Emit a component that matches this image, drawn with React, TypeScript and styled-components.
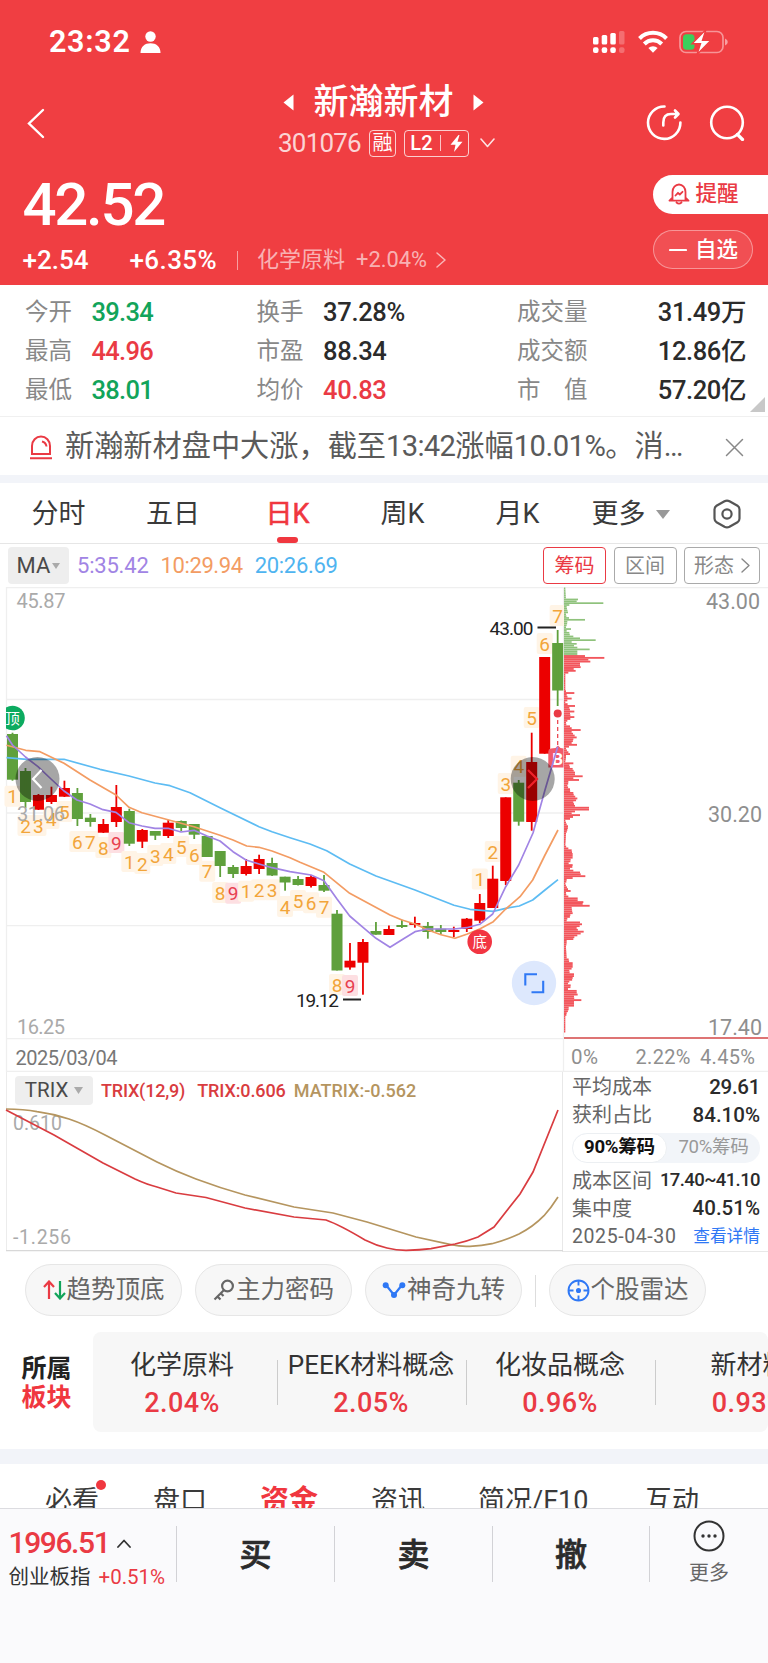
import React from "react";
import styled, { createGlobalStyle } from "styled-components";

const RED = "#f0373f";
const UP = "#ea3a44";
const DOWN = "#12a45a";
const FONT = `Roboto, "Noto Sans CJK SC", sans-serif`;

const Global = createGlobalStyle`
  *{box-sizing:border-box}
  body{margin:0;background:#fff;font-family:${FONT};line-height:1;color:#333}
`;

const Page = styled.div`
  width: 768px;
  height: 1663px;
  overflow: hidden;
  display: flex;
  flex-direction: column;
`;

type TxtProps = { $s: number; $c?: string; $w?: number; $ls?: number; $ml?: number; $y?: number };
const Txt = styled.span<TxtProps>`
  font-size: ${(p) => p.$s}px;
  color: ${(p) => p.$c ?? "inherit"};
  font-weight: ${(p) => p.$w ?? 400};
  letter-spacing: ${(p) => p.$ls ?? 0}px;
  margin-left: ${(p) => p.$ml ?? 0}px;
  padding-top: ${(p) => p.$y ?? 0}px;
  white-space: nowrap;
`;

/* ---------- header ---------- */
const Header = styled.header`
  height: 285px;
  background: #f03e42;
  color: #fff;
  flex: none;
`;
const StatusBar = styled.div`
  height: 78px;
  padding: 6px 40px 0 49px;
  display: flex;
  align-items: center;
`;
const StatusIcons = styled.div`
  margin-left: auto;
  display: flex;
  align-items: center;
`;
const NavRow = styled.div`
  height: 86px;
  padding: 0 23px 0 26px;
  display: grid;
  grid-template-columns: 95px 1fr 99px;
  align-items: center;
`;
const TitleBlock = styled.div`
  display: flex;
  flex-direction: column;
  align-items: center;
  padding-bottom: 3px;
`;
const TitleLine = styled.div`
  display: flex;
  align-items: center;
  gap: 19px;
  height: 40px;
`;
const CodeLine = styled.div`
  display: flex;
  align-items: center;
  height: 28px;
  margin-top: 7px;
  padding-left: 6px;
`;
const Badge = styled.span<{ $w: number; $ml: number }>`
  width: ${(p) => p.$w}px;
  height: 27px;
  margin-left: ${(p) => p.$ml}px;
  border: 1.5px solid rgba(255, 255, 255, 0.75);
  border-radius: 4px;
  display: flex;
  align-items: center;
  justify-content: center;
  font-size: 20px;
`;
const NavActions = styled.div`
  display: flex;
  justify-content: space-between;
  padding-top: 3px;
`;
const PriceRow = styled.div`
  display: flex;
  justify-content: space-between;
  height: 121px;
`;
const PriceCol = styled.div`
  padding: 11px 0 0 22.5px;
`;
const ChangeLine = styled.div`
  display: flex;
  align-items: center;
  height: 26px;
  margin-top: 12px;
`;
const VLine = styled.i<{ $h: number; $c: string; $ml?: number }>`
  width: 1px;
  flex: none;
  height: ${(p) => p.$h}px;
  background: ${(p) => p.$c};
  margin-left: ${(p) => p.$ml ?? 0}px;
`;
const PillCol = styled.div`
  width: 115px;
  padding-top: 10.5px;
`;
const AlertPill = styled.div`
  height: 39px;
  border-radius: 20px 0 0 20px;
  background: #fff;
  color: ${UP};
  display: flex;
  align-items: center;
  padding-left: 15px;
`;
const WatchPill = styled.div`
  width: 100px;
  height: 39px;
  margin-top: 16.5px;
  border-radius: 20px;
  border: 1.5px solid rgba(255, 255, 255, 0.4);
  background: rgba(255, 255, 255, 0.09);
  display: flex;
  align-items: center;
  padding-left: 15px;
`;

/* ---------- stats ---------- */
const Stats = styled.section`
  height: 132px;
  flex: none;
  padding: 8px 22px 0 25px;
  border-bottom: 1.5px solid #f0f0f0;
  position: relative;
`;
const StatRow = styled.div`
  height: 39px;
  display: grid;
  grid-template-columns: 66.5px 165px 66.5px 194px 1fr auto;
  align-items: center;
`;
const Corner = styled.svg`
  position: absolute;
  right: 3px;
  bottom: 4px;
`;
const News = styled.section`
  height: 58px;
  flex: none;
  display: flex;
  align-items: center;
  padding: 2px 24px 0 29px;
  color: #5a5a5a;
`;
const NewsText = styled.div`
  font-size: 29.2px;
  margin-left: 12px;
  flex: 1;
  white-space: nowrap;
`;
const Band = styled.div<{ $h: number }>`
  height: ${(p) => p.$h}px;
  flex: none;
  background: #f2f4f9;
`;

/* ---------- period tabs ---------- */
const Periods = styled.nav`
  height: 61px;
  flex: none;
  display: grid;
  grid-template-columns: 117px 112px 117px 113px 117px 109px 83px;
  border-bottom: 1.5px solid #e6e6e6;
`;
const Period = styled.div<{ $on?: boolean }>`
  display: flex;
  align-items: center;
  justify-content: center;
  font-size: 27px;
  font-weight: 400;
  color: ${(p) => (p.$on ? RED : "#3a3a3a")};
  -webkit-text-stroke: ${(p) => (p.$on ? "0.6px " + RED : "0")};
  position: relative;
  padding-top: 2px;
  gap: 10px;
  &::after {
    content: "";
    display: ${(p) => (p.$on ? "block" : "none")};
    position: absolute;
    left: 48px;
    bottom: 0;
    width: 21px;
    height: 6px;
    border-radius: 3px;
    background: ${RED};
  }
`;
const MaRow = styled.div`
  height: 43px;
  flex: none;
  display: flex;
  align-items: center;
  padding: 0 8px;
`;
const Select = styled.div<{ $w: number; $h: number; $gap: number }>`
  width: ${(p) => p.$w}px;
  height: ${(p) => p.$h}px;
  background: #eee;
  border-radius: 4px;
  display: flex;
  align-items: center;
  justify-content: center;
  gap: ${(p) => p.$gap}px;
  color: #4a4a4a;
`;
const OutlineBtn = styled.div<{ $w: number; $on?: boolean }>`
  width: ${(p) => p.$w}px;
  height: 37px;
  margin-right: 7.5px;
  &:last-child {
    margin-right: 0;
  }
  border: 1.5px solid ${(p) => (p.$on ? UP : "#aaa")};
  color: ${(p) => (p.$on ? UP : "#888")};
  border-radius: 4px;
  font-size: 20px;
  display: flex;
  align-items: center;
  justify-content: center;
`;
const BtnGroup = styled.div`
  margin-left: auto;
  display: flex;
`;

/* ---------- charts ---------- */
const ChartSvg = styled.svg`
  display: block;
  flex: none;
  font-family: ${FONT};
`;
const LowerRow = styled.div`
  height: 180px;
  flex: none;
  display: flex;
`;
const TrixPanel = styled.div`
  width: 563px;
  border-right: 1px solid #e8e8e8;
  display: flex;
  flex-direction: column;
`;
const TrixHead = styled.div`
  height: 36px;
  padding: 1px 0 0 8px;
  display: flex;
  align-items: center;
  border-left: 1px solid #ececec;
  margin-left: 6px;
`;
const Chips = styled.aside`
  flex: 1;
  padding: 1px 8px 0 9px;
  border-bottom: 1px solid #e8e8e8;
  height: 180px;
`;
const ChipRow = styled.div<{ $h?: number }>`
  height: ${(p) => p.$h ?? 28.3}px;
  display: flex;
  justify-content: space-between;
  align-items: center;
  font-size: 20px;
  color: #666;
`;
const Toggle = styled.div`
  height: 30px;
  margin: 3px 0 4px;
  border-radius: 15px;
  background: #f2f5f9;
  display: flex;
  overflow: hidden;
`;
const ToggleItem = styled.div<{ $on?: boolean }>`
  flex: 1;
  border-radius: 15px;
  background: ${(p) => (p.$on ? "#fff" : "transparent")};
  border: ${(p) => (p.$on ? "1px solid #eceff2" : "0")};
  color: ${(p) => (p.$on ? "#111" : "#999")};
  font-weight: ${(p) => (p.$on ? 700 : 400)};
  font-size: 18.6px;
  letter-spacing: -0.3px;
  display: flex;
  align-items: center;
  justify-content: center;
`;

/* ---------- tools & sectors ---------- */
const Tools = styled.section`
  height: 80px;
  flex: none;
  padding: 12px 25px 0;
  display: flex;
  gap: 13px;
  align-items: flex-start;
`;
const Tool = styled.div`
  width: 157px;
  height: 52px;
  border-radius: 26px;
  background: #f7f7f7;
  border: 1px solid #e6e6e6;
  display: flex;
  align-items: center;
  justify-content: center;
  gap: 1px;
  font-size: 24.5px;
  color: #666;
  flex: none;
`;
const ToolSep = styled.i`
  width: 1px;
  height: 32px;
  margin-top: 11px;
  background: #ddd;
`;
const Sectors = styled.section`
  height: 117px;
  flex: none;
  display: flex;
`;
const SectorTitle = styled.div`
  width: 93px;
  padding: 22px 0 0 21.5px;
  font-size: 25px;
  font-weight: 700;
  line-height: 29px;
  color: #222;
  em {
    font-style: normal;
    color: ${RED};
    display: block;
  }
`;
const SectorList = styled.div`
  flex: 1;
  height: 100px;
  background: #f7f7f7;
  border-radius: 8px;
  display: flex;
  overflow: hidden;
`;
const Sector = styled.div<{ $w: number; $sh?: number }>`
  width: ${(p) => p.$w}px;
  flex: none;
  display: flex;
  flex-direction: column;
  align-items: center;
  padding-top: 20px;
  gap: 12px;
  padding-right: ${(p) => p.$sh ?? 0}px;
  background: linear-gradient(#ccc, #ccc) right 28px / 1px 45px no-repeat;
`;
const InfoTabs = styled.nav`
  height: 44px;
  flex: none;
  overflow: hidden;
  display: flex;
  padding-left: 45px;
`;
const InfoTab = styled.div<{ $w: number; $on?: boolean }>`
  width: ${(p) => p.$w}px;
  height: 74px;
  flex: none;
  font-size: ${(p) => (p.$on ? 29 : 27)}px;
  font-weight: ${(p) => (p.$on ? 700 : 400)};
  color: ${(p) => (p.$on ? RED : "#3a3a3a")};
  line-height: 74px;
  white-space: nowrap;
  position: relative;
`;
const Dot = styled.i`
  position: absolute;
  left: 51px;
  top: 16px;
  width: 10px;
  height: 10px;
  border-radius: 50%;
  background: ${RED};
`;

/* ---------- bottom bar ---------- */
const Bottom = styled.footer`
  flex: 1;
  background: #fafafc;
  border-top: 1.5px solid #dcdce0;
  display: flex;
`;
const IndexBox = styled.div`
  width: 176px;
  padding: 19px 0 0 8.5px;
`;
const IndexLine = styled.div`
  display: flex;
  align-items: center;
  height: 30px;
  & + & {
    margin-top: 4px;
  }
`;
const Trade = styled.div<{ $w: number }>`
  width: ${(p) => p.$w}px;
  height: 56px;
  margin-top: 17px;
  border-left: 1px solid #d2d2d6;
  display: flex;
  align-items: center;
  justify-content: center;
  font-size: 32px;
  font-weight: 500;
  -webkit-text-stroke: 0.7px #2b2b2b;
  color: #2b2b2b;
  padding-top: 1px;
`;
const More = styled.div`
  flex: 1;
  height: 56px;
  margin-top: 17px;
  border-left: 1px solid #d2d2d6;
  display: flex;
  flex-direction: column;
  align-items: center;
  gap: 11px;
  font-size: 20px;
  color: #666;
  svg {
    margin-top: -6px;
    flex: none;
  }
`;
const Gap = styled.span<{ $l: number }>`
  margin-left: ${(p) => p.$l}px;
  display: flex;
`;

/* ---------- data ---------- */
// [up, bodyTop, bodyBottom, wickTop, wickBottom]
const candles: [number, number, number, number, number][] = [
  [0, 734, 779.7, 732.7, 780.7], [0, 771, 802, 768, 808], [1, 795, 809.7, 794, 810], [1, 795, 802, 786.7, 804],
  [1, 788, 796.7, 780.7, 797], [0, 793, 819, 788, 826], [0, 817.7, 822, 814, 826.7], [1, 824, 832.7, 819, 833],
  [1, 807, 822, 785, 827], [0, 811, 843.7, 808.7, 846], [1, 830, 841.7, 829, 848], [0, 831, 835.7, 831, 840],
  [1, 822.7, 836, 820, 838], [0, 821, 828, 820.5, 831], [0, 824, 834.7, 824, 839], [0, 836, 857, 836, 857],
  [0, 851, 866, 851, 877], [0, 867, 874, 865, 878], [1, 866, 874, 859, 875.5], [1, 859, 869, 854.7, 874],
  [0, 863, 875.5, 857.7, 876], [0, 876.7, 882.5, 876.7, 890.7], [0, 879, 885, 876, 885.5], [1, 877, 886, 875, 887.5],
  [0, 885, 890.7, 875, 892], [0, 913.7, 970.5, 910, 970.5], [1, 960.7, 967.5, 943, 969.7], [1, 942, 962.7, 939, 994.7],
  [0, 931, 934.7, 922, 934.7], [1, 929, 935, 925.5, 935], [0, 925, 927, 919.7, 928], [1, 923, 924.9, 916.7, 927.7],
  [0, 926, 932, 922, 938.7], [0, 928.7, 932, 925, 934.7], [1, 930, 932, 926.7, 937], [1, 918.7, 929, 918, 932],
  [1, 903, 920.7, 894, 923], [1, 878.7, 908, 865.7, 908], [1, 797.3, 881, 797.3, 885], [0, 782.7, 821.7, 780, 825.7],
  [1, 762, 822, 732.7, 830.7], [1, 657, 753.7, 657, 753.7], [0, 643, 690.5, 630, 706],
];
// [candle index, count, centre y]
const counts: [number, number, number][] = [
  [0, 1, 796.7], [1, 2, 826], [2, 3, 826], [3, 4, 819], [4, 5, 812], [5, 6, 842], [6, 7, 842], [7, 8, 848], [8, 9, 843],
  [9, 1, 862], [10, 2, 864], [11, 3, 856], [12, 4, 854], [13, 5, 847], [14, 6, 855], [15, 7, 871.7], [16, 8, 893],
  [17, 9, 893.7], [18, 1, 891.7], [19, 2, 890.3], [20, 3, 890.3], [21, 4, 907], [22, 5, 901], [23, 6, 903.3], [24, 7, 907.7],
  [25, 8, 985], [26, 9, 986], [36, 1, 879.5], [37, 2, 852], [38, 3, 784], [39, 4, 766.7], [40, 5, 718], [41, 6, 644], [42, 7, 616],
];
const cx = (i: number) => 12.5 + 12.98 * i;

const ma5 = "6.5,735.7 12.5,745 25.5,757 38,766.7 51,779 64,791 77,800 90,804 103,809.7 116,812.3 129,822.7 142,826 155,828.3 168,828.3 181,832 194,830.3 207,836 220,841 233,851.7 246,860 259,864 272,867.7 290,871.7 311,875 324,880.7 337,899 349.7,916 363,927.3 376,938.3 390,947.3 402,939.7 415,931.7 428,929 454,929 466.7,927.7 479.7,924.3 492.7,914 505.7,886.7 518.7,865 533,833 545,790 557.7,746.7";
const ma10 = "6.5,745.3 25.7,750.3 40,751.7 64,763.3 90,780 116,795 129,807.3 142,812.7 168,819.7 194,826.7 220,835.3 233,840 246.7,846 259,847.3 272,851 290,857.7 300,862.3 324,872.3 349.7,893.3 390,915 402,920 415,924 428,930 441,934.7 455,938.3 466.7,934.3 479.7,929 493.3,921.7 505.7,909 520,896.7 532.7,880 545,855 558,830";
const ma20 = "6.5,757.7 26.7,759.3 64,759.3 100,769.3 129,776 155,783 170,785.7 190,792.7 220,807.7 259,826.7 272,831.7 290,837.7 310,844 326.7,850.7 349.7,864 376,876 415,890 454,905.3 470,909.3 493.3,911.3 505.7,908.3 519.3,906 532.7,900 545,890 558,879.7";

// chip distribution: [y, bar length]
const pairs = (src: string, y0: number, x0: number) =>
  src.split(",").map((p) => {
    const [y, x] = p.split(":").map(Number);
    return [y0 + y / 3, (x - x0) / 3] as [number, number];
  });
const sellSide = pairs("52:256,86:258,88:294,92:284,95:290,98:370,101:256,105:268,110:260,125:264,135:258,147:275,152:315,156:262,170:258,180:273,185:260,190:268,197:275,200:280,205:300,210:347,214:275,222:290,226:282,232:292,236:329,240:285,245:292,253:292", 570, 252);
const holdSide = [
  ...pairs("256:315,262:373,268:325,274:331,278:295,283:300,289:302,293:280,300:287,307:265,315:256,355:256,363:258,370:283,376:260,385:275,390:262,397:256,408:285,415:268,425:283,432:270,443:283,450:262,460:258,468:270,474:275,479:302,484:275,500:290,507:280,520:275,527:291,535:258,550:270,560:258,575:256,580:280,587:268,595:278,605:285,611:285,617:308,622:280,627:270,632:297,637:265,645:262,660:270,670:280,685:292,695:280,705:285,713:327,718:327,722:285,728:275,735:272", 570, 252),
  ...pairs("44:100,48:120,55:90,60:76,80:84,100:78,135:76,150:95,160:98,170:98,180:92,190:86,197:98,205:90,214:100,219:120,228:136,234:98,240:80,250:76,265:84,273:92,280:78,290:85,295:113,303:113,308:130,314:128,318:149,322:95,340:98,355:82,362:80,368:120,375:126,385:110,395:131,402:122,410:103,418:100,425:80,440:78,470:80,480:86,490:98,500:98,510:88,520:90,525:102,535:98,545:88,552:84,558:92,568:84,575:110,582:113,590:102,600:105,602:124,606:102,615:102,625:86,640:80,650:76,694:76", 800, 72),
];
const STEP = 1.85;
const bars = (pts: [number, number][], from: number, to: number) => {
  const out: [number, number][] = [];
  for (let y = from; y < to; y += STEP) {
    const peak = pts.filter((p) => p[0] >= y && p[0] < y + STEP).map((p) => p[1]);
    let w = 1.5;
    if (peak.length) w = Math.max(...peak);
    else {
      const k = pts.findIndex((p) => p[0] > y);
      if (k > 0) {
        const [a, b] = [pts[k - 1], pts[k]];
        w = Math.min(a[1] + ((b[1] - a[1]) * (y - a[0])) / (b[0] - a[0]), Math.min(a[1], b[1]) + 3);
      }
    }
    out.push([y, w]);
  }
  return out;
};

const Label = ({ x, y, w, s, c, t, weight }: { x: number; y: number; w: number; s: number; c: string; t: string; weight?: number }) => (
  <text x={x} y={y} textLength={w} fontSize={s} fill={c} fontWeight={weight}>{t}</text>
);

const KChart = () => (
  <ChartSvg width="768" height="485" viewBox="0 587 768 485">
    <g stroke="#efefef" strokeWidth="1.3" fill="none">
      <path d="M6 587.5H768M6 699.5H563M6 813H563M6 925.7H563M6 1038.7H563M6 1071.4H768M6.5 587V1072M563.5 587V1072" />
    </g>
    {counts.map(([i, n, y]) => (
      <rect key={i} x={cx(i) - 8} y={y - 11} width="16" height="21" rx="2" fill={n === 9 ? "#fddfe2" : "#fff4e6"} />
    ))}
    {counts.map(([i, n, y]) => (
      <text key={i} x={cx(i)} y={y + 6.5} textAnchor="middle" fontSize="19" fill={n === 9 ? "#e8404f" : "#f2a53a"}>{n}</text>
    ))}
    {candles.map(([up, a, b, c, d], i) => (
      <g key={i} fill={up ? "#ec0000" : "#5fa03c"}>
        <rect x={cx(i) - 5.5} y={a} width="11" height={b - a} />
        <rect x={cx(i) - 0.9} y={c} width="1.8" height={d - c} />
      </g>
    ))}
    <path d="M548.3 767.5V751.5Q548.3 749 551 748.5L555.5 748L558 745.5L560.5 748L563.5 748.5V767.5Z" fill="#f2596a" />
    <text x="557.8" y="764.5" textAnchor="middle" fontSize="17" fontWeight="700" fill="#fff">B</text>
    <g fill="none" strokeWidth="1.7" strokeLinejoin="round">
      <polyline points={ma20} stroke="#5dbcf3" />
      <polyline points={ma10} stroke="#f39c63" />
      <polyline points={ma5} stroke="#a184e4" />
    </g>
    <circle cx="557.7" cy="713.5" r="4" fill={UP} />
    <path d="M557.7 720V746" stroke={UP} strokeWidth="1.2" strokeDasharray="4 3" />
    {bars(sellSide, 587.5, 655).map(([y, w]) => (
      <rect key={y} x="564" y={y} width={w} height="1.7" fill="#8fc27c" />
    ))}
    {bars(holdSide, 655.1, 1031).map(([y, w]) => (
      <rect key={y} x="564" y={y} width={w} height="1.85" fill="#f2565c" />
    ))}
    <rect x="564" y="1037" width="204" height="2" fill="#de7474" />
    <Label x={16.5} y={607.5} w={49} s={20} c="#aaa" t="45.87" />
    <Label x={17} y={821} w={48} s={20} c="#aaa" t="31.06" />
    <Label x={17} y={1034} w={48} s={20} c="#aaa" t="16.25" />
    <Label x={706} y={608.5} w={54} s={21.5} c="#8f8f8f" t="43.00" />
    <Label x={708} y={822} w={54} s={21.5} c="#8f8f8f" t="30.20" />
    <Label x={708} y={1035} w={54} s={21.5} c="#8f8f8f" t="17.40" />
    <Label x={489.5} y={635} w={44} s={19} c="#222" t="43.00" />
    <Label x={296} y={1007} w={43} s={19} c="#222" t="19.12" />
    <path d="M537.5 627.5H556M343 999.5H361" stroke="#222" strokeWidth="1.8" />
    <Label x={15.5} y={1065} w={102} s={20} c="#777" t="2025/03/04" />
    <Label x={571} y={1064} w={27} s={20.5} c="#8f8f8f" t="0%" />
    <Label x={635.5} y={1064} w={55} s={20} c="#8f8f8f" t="2.22%" />
    <Label x={700} y={1064} w={55} s={20} c="#8f8f8f" t="4.45%" />
    <clipPath id="plot"><rect x="6" y="587" width="560" height="485" /></clipPath>
    <g clipPath="url(#plot)">
      <circle cx="12.5" cy="718" r="12.3" fill="#0cab60" />
      <text x="12.5" y="723.5" textAnchor="middle" fontSize="14.5" fill="#fff">顶</text>
    </g>
    <circle cx="479.7" cy="941.7" r="12.3" fill="#f23542" />
    <text x="479.7" y="947" textAnchor="middle" fontSize="14.5" fill="#fff">底</text>
    <circle cx="37.5" cy="779" r="22" fill="rgba(0,0,0,.35)" />
    <path d="M41.5 770L33 779L41.5 788" stroke="#fff" strokeWidth="2.2" fill="none" />
    <circle cx="532.7" cy="779" r="22" fill="rgba(0,0,0,.35)" />
    <path d="M528 770L537 779L528 788" stroke="#f0222a" strokeWidth="2.2" fill="none" />
    <circle cx="534" cy="983" r="22.2" fill="#dde8fd" />
    <path d="M525.3 985.5V974.3H537M531.5 992.3H543.2V980.8" stroke="#2f78f5" strokeWidth="2.1" fill="none" />
  </ChartSvg>
);

const TrixChart = () => (
  <ChartSvg width="563" height="144" viewBox="0 1108 563 144">
    <path d="M6.5 1108V1251" stroke="#ececec" />
    <path d="M6 1250.7H563" stroke="#d8d8d8" strokeWidth="1.3" />
    <Label x={13} y={1130} w={49} s={19.5} c="#aaa" t="0.610" />
    <Label x={13} y={1244} w={58} s={19.5} c="#aaa" t="-1.256" />
    <g fill="none" strokeWidth="1.7">
      <path d="M6 1109Q24 1109 37 1111.7Q54 1114 69 1119Q84 1124 105 1135L157 1162Q175 1171 196 1179Q220 1188 245 1195L294 1207L333 1213L367 1222L416 1237L451 1244.7Q462 1247 470 1246.3Q482 1246 492 1243.7Q506 1240 519 1234Q533 1227 544 1215.7Q551 1208 558 1197" stroke="#b5955f" />
      <path d="M6 1110L54 1135L103 1163L135 1179Q147 1184.5 157 1187L176 1193L206 1197.5L245 1208L294 1217L326 1220Q340 1225 365 1240Q376 1245.5 387 1248Q396 1250.3 406 1250.3Q420 1250 431 1248.6L455 1244Q468 1241 478 1237L494 1227L520 1194L533 1172L558 1110" stroke="#d93c40" />
    </g>
  </ChartSvg>
);

const Tri = ({ w, h, c, d }: { w: number; h: number; c: string; d: string }) => (
  <svg width={w} height={h} viewBox={`0 0 ${w} ${h}`} fill={c}><path d={d} /></svg>
);
const Stroke = ({ w, h, d, c = "currentColor", sw = 2 }: { w: number; h: number; d: string; c?: string; sw?: number }) => (
  <svg width={w} height={h} viewBox={`0 0 ${w} ${h}`} fill="none" stroke={c} strokeWidth={sw} strokeLinecap="round" strokeLinejoin="round">
    <path d={d} />
  </svg>
);

const stats = [
  ["今开", "39.34", DOWN, "换手", "37.28%", "#2b2b2b", "成交量", "31.49万"],
  ["最高", "44.96", UP, "市盈", "88.34", "#2b2b2b", "成交额", "12.86亿"],
  ["最低", "38.01", DOWN, "均价", "40.83", UP, "市　值", "57.20亿"],
];
const sectors: [string, string, number, number][] = [
  ["化学原料", "2.04%", 185, 7], ["PEEK材料概念", "2.05%", 189, 3], ["化妆品概念", "0.96%", 189, 3], ["新材料", "0.93%", 189, 2],
];

export default function App() {
  return (
    <Page>
      <Global />
      <Header>
        <StatusBar>
          <Txt $s={30.5} $w={600} $ls={0.7}>23:32</Txt>
          <Gap $l={9}>
            <svg width="21" height="22" viewBox="0 0 21 22" fill="#fff">
              <circle cx="10.5" cy="5.5" r="5.2" /><path d="M0.5 22C0.5 15.5 5 12.300 10.5 12.300S20.5 15.5 20.5 22Z" />
            </svg>
          </Gap>
          <StatusIcons>
            <svg width="135" height="24" viewBox="0 0 135 24" fill="#fff">
              <rect x="0" y="7" width="5.500" height="7.500" rx="1.500" /><rect x="8.700" y="5" width="5.500" height="9.500" rx="1.500" /><rect x="17.300" y="3" width="5.500" height="11.500" rx="1.500" /><rect x="26" y="1" width="5.500" height="13.500" rx="1.500" opacity=".25" />
              <rect x="0" y="17.300" width="5.500" height="5.700" rx="2" /><rect x="8.700" y="17.300" width="5.500" height="5.700" rx="2" /><rect x="17.300" y="17.300" width="5.500" height="5.700" rx="2" /><rect x="26" y="17.300" width="5.500" height="5.700" rx="2" opacity=".25" />
              <g fill="none" stroke="#fff" strokeWidth="4"><path d="M46.500 8.500A19 19 0 0 1 73.500 8.500" /><path d="M51.300 14A12.200 12.200 0 0 1 68.700 14" /></g>
              <path d="M60 22.800L55.400 18A6.600 6.600 0 0 1 64.600 18Z" />
              <rect x="87" y="1.500" width="43" height="21" rx="6" fill="none" stroke="#fff" strokeOpacity=".45" strokeWidth="1.700" />
              <rect x="90" y="4.300" width="11.500" height="15.500" rx="3.500" fill="#3ccf5c" />
              <path d="M132 8.500Q134.800 9.500 134.800 12T132 15.500Z" opacity=".5" />
              <path d="M113 -0.500L99 13.800H107.500L104 24.500L118 10.200H109.500Z" stroke="#f03e42" strokeWidth="1.400" />
            </svg>
          </StatusIcons>
        </StatusBar>
        <NavRow>
          <svg width="20" height="36" viewBox="0 -4 20 36" fill="none" stroke="#fff" strokeWidth="2.400" strokeLinecap="round"><path d="M17 3L3 16.500L17 30" /></svg>
          <TitleBlock>
            <TitleLine>
              <Tri w={11} h={17} c="#fff" d="M10.500 0.500V16.500L0.500 8.500Z" />
              <Txt $s={35} $w={500}>新瀚新材</Txt>
              <Tri w={11} h={17} c="#fff" d="M0.500 0.500V16.500L10.500 8.500Z" />
            </TitleLine>
            <CodeLine>
              <Txt $s={26} $c="rgba(255,255,255,.78)" $ls={-0.8}>301076</Txt>
              <Badge $w={27} $ml={8}>融</Badge>
              <Badge $w={65} $ml={8}>
                <Txt $s={20} $w={500}>L2</Txt>
                <VLine $h={16} $c="rgba(255,255,255,.7)" $ml={7} />
                <Gap $l={9}><svg width="13" height="17" viewBox="0 0 13 17" fill="#fff"><path d="M8.500 0L0.500 9.800H5.500L4 17L12.500 6.800H7.500L9.500 0Z" /></svg></Gap>
              </Badge>
              <Gap $l={11}><Stroke w={15} h={10} d="M1 1L7.500 8.500L14 1" sw={1.6} c="rgba(255,255,255,.85)" /></Gap>
            </CodeLine>
          </TitleBlock>
          <NavActions>
            <svg width="37" height="36" viewBox="0 0 37 36" fill="none" stroke="#fff" strokeWidth="2.600" strokeLinecap="round" strokeLinejoin="round">
              <path d="M18.500 1.500A16.200 16.200 0 1 0 34.400 17.500" /><path d="M17.300 20.500V17.500Q17.300 9 25 9H31" /><path d="M29 5.500L32.500 9L29 12.500" fill="#fff" />
            </svg>
            <svg width="36" height="36" viewBox="0 0 36 36" fill="none" stroke="#fff" strokeWidth="2.600" strokeLinecap="round">
              <circle cx="18" cy="17.500" r="15.800" /><path d="M28.500 29.500L33.500 34.500" strokeWidth="3.200" />
            </svg>
          </NavActions>
        </NavRow>
        <PriceRow>
          <PriceCol>
            <Txt $s={60} $w={500} $ls={-2.3} as="div">42.52</Txt>
            <ChangeLine>
              <Txt $s={26} $w={500}>+2.54</Txt>
              <Txt $s={26} $w={500} $ml={41} $ls={0.4}>+6.35%</Txt>
              <VLine $h={19} $c="rgba(255,255,255,.5)" $ml={20} />
              <Txt $s={22} $c="rgba(255,255,255,.62)" $ml={19}>化学原料</Txt>
              <Txt $s={21.8} $c="rgba(255,255,255,.62)" $ml={11}>+2.04%</Txt>
              <Gap $l={9}><Stroke w={10} h={16} d="M1 1L9 8L1 15" sw={1.5} c="rgba(255,255,255,.62)" /></Gap>
            </ChangeLine>
          </PriceCol>
          <PillCol>
            <AlertPill>
              <Stroke w={22} h={22} d="M4.500 17V9A6.500 7.500 0 0 1 17.500 9V17M4.500 14.500L1.500 17.700H20.500L17.500 14.500M8.500 19.500Q11 21.800 13.500 19.500M7.500 12.500L10 9.800L11.800 11.500L14.500 8.800" sw={1.8} />
              <Txt $s={21.5} $w={500} $ml={5.5}>提醒</Txt>
            </AlertPill>
            <WatchPill>
              <Stroke w={18} h={4} d="M1 2H17" sw={2.2} />
              <Txt $s={21.5} $w={500} $ml={8}>自选</Txt>
            </WatchPill>
          </PillCol>
        </PriceRow>
      </Header>

      <Stats>
        {stats.map((r) => (
          <StatRow key={r[0]}>
            <Txt $s={23.5} $c="#888">{r[0]}</Txt>
            <Txt $s={25.5} $c={r[2]} $w={500} $ls={-0.7} $y={1}>{r[1]}</Txt>
            <Txt $s={23.5} $c="#888">{r[3]}</Txt>
            <Txt $s={25.5} $c={r[5]} $w={500} $ls={-0.3} $y={1}>{r[4]}</Txt>
            <Txt $s={23.5} $c="#888">{r[6]}</Txt>
            <Txt $s={25.5} $c="#2b2b2b" $w={500} $ls={-0.4} $y={1}>{r[7]}</Txt>
          </StatRow>
        ))}
        <Corner width="15" height="15"><path d="M15 0V15H0Z" fill="#c8c8c8" /></Corner>
      </Stats>

      <News>
        <svg width="24" height="25" viewBox="0 0 24 25" fill="none" stroke={UP} strokeWidth="2"><path d="M3 19V11A9 9.500 0 0 1 21 11V19ZM1 23.300H23M13 6.500Q17 7.500 17.500 11.500" /></svg>
        <NewsText>
          新瀚新材盘中大涨，截至<Txt $s={29.2} $ls={-0.7}>13:42</Txt>涨幅<Txt $s={29.2} $ls={-0.5}>10.01%</Txt>。消…
        </NewsText>
        <Stroke w={19} h={19} d="M1.500 1.500L17.500 17.500M17.500 1.500L1.500 17.500" sw={1.5} c="#888" />
      </News>
      <Band $h={8} />

      <Periods>
        <Period>分时</Period>
        <Period>五日</Period>
        <Period $on>日K</Period>
        <Period>周K</Period>
        <Period>月K</Period>
        <Period>更多<Tri w={14} h={9} c="#999" d="M0 0H14L7 9Z" /></Period>
        <Period>
          <svg width="30" height="30" viewBox="0 0 30 30" fill="none" stroke="#555" strokeWidth="2.200" strokeLinejoin="round"><path d="M12.500 2.200Q15 .9 17.500 2.200L25.500 6.800Q27.500 8 27.500 10.500V19.500Q27.500 22 25.500 23.200L17.500 27.800Q15 29.100 12.500 27.800L4.500 23.200Q2.500 22 2.500 19.500V10.500Q2.500 8 4.500 6.800Z" /><circle cx="15" cy="15" r="4.600" /></svg>
        </Period>
      </Periods>

      <MaRow>
        <Select $w={61} $h={37} $gap={2}><Txt $s={22}>MA</Txt><Tri w={8} h={6} c="#aaa" d="M0 0H8L4 6Z" /></Select>
        <Txt $s={22} $c="#a184e4" $ml={8} $ls={-0.2}>5:35.42</Txt>
        <Txt $s={22} $c="#f39c63" $ml={12} $ls={-0.4}>10:29.94</Txt>
        <Txt $s={22} $c="#4fb4f0" $ml={12} $ls={-0.3}>20:26.69</Txt>
        <BtnGroup>
          <OutlineBtn $w={63} $on>筹码</OutlineBtn>
          <OutlineBtn $w={63}>区间</OutlineBtn>
          <OutlineBtn $w={76}>形态<Gap $l={7}><Stroke w={9} h={15} d="M1 1L8 7.500L1 14" sw={1.4} /></Gap></OutlineBtn>
        </BtnGroup>
      </MaRow>

      <KChart />

      <LowerRow>
        <TrixPanel>
          <TrixHead>
            <Select $w={78} $h={29} $gap={6}><Txt $s={20.5}>TRIX</Txt><Tri w={9} h={7} c="#aaa" d="M0 0H9L4.500 7Z" /></Select>
            <Txt $s={18} $w={500} $c="#d93c40" $ml={8} $ls={-0.2}>TRIX(12,9)</Txt>
            <Txt $s={18} $w={500} $c="#d93c40" $ml={12} $ls={-0.1}>TRIX:0.606</Txt>
            <Txt $s={18} $w={500} $c="#b5955f" $ml={8}>MATRIX:-0.562</Txt>
          </TrixHead>
          <TrixChart />
        </TrixPanel>
        <Chips>
          <ChipRow>平均成本<Txt $s={20.5} $w={500} $c="#2b2b2b" $ls={-0.3}>29.61</Txt></ChipRow>
          <ChipRow>获利占比<Txt $s={20.5} $w={500} $c="#2b2b2b">84.10%</Txt></ChipRow>
          <Toggle>
            <ToggleItem $on>90%筹码</ToggleItem>
            <ToggleItem>70%筹码</ToggleItem>
          </Toggle>
          <ChipRow $h={28}>成本区间<Txt $s={18.5} $w={500} $c="#2b2b2b" $ls={-0.6}>17.40~41.10</Txt></ChipRow>
          <ChipRow $h={28}>集中度<Txt $s={20.5} $w={500} $c="#2b2b2b">40.51%</Txt></ChipRow>
          <ChipRow $h={29}><Txt $s={19.5} $ls={0.6}>2025-04-30</Txt><Txt $s={16.7} $c="#2f78f5">查看详情</Txt></ChipRow>
        </Chips>
      </LowerRow>

      <Tools>
        <Tool>
          <svg width="23" height="20" viewBox="0 0 23 20" fill="none" strokeWidth="2.200"><path d="M6 19V2M1 7L6 1.500L11 7" stroke={UP} /><path d="M17 1V18M12 13L17 18.500L22 13" stroke={DOWN} /></svg>
          趋势顶底
        </Tool>
        <Tool>
          <svg width="22" height="22" viewBox="0 0 22 22" fill="none" stroke="#666" strokeWidth="2.200"><circle cx="14.500" cy="7" r="5.400" /><path d="M11 11L1.500 20.500M4 17L7.500 20.500M7 13.500L10.500 17" /></svg>
          主力密码
        </Tool>
        <Tool>
          <svg width="24" height="18" viewBox="0 0 24 18" fill="#2f78f5"><path d="M4 4L12 14L20 4" fill="none" stroke="#2f78f5" strokeWidth="2.200" /><circle cx="3.700" cy="4.200" r="3" /><circle cx="20.300" cy="4.200" r="3" /><circle cx="12" cy="14" r="3" /></svg>
          神奇九转
        </Tool>
        <ToolSep />
        <Tool>
          <svg width="23" height="23" viewBox="0 0 23 23" fill="none" stroke="#2f78f5" strokeWidth="1.900"><circle cx="11.500" cy="11.500" r="10" /><path d="M11.500 1V6.500M11.500 16.500V22M1 11.500H6.500M16.500 11.500H22" /><circle cx="11.500" cy="11.500" r="1.600" fill="#2f78f5" /></svg>
          个股雷达
        </Tool>
      </Tools>

      <Sectors>
        <SectorTitle>所属<em>板块</em></SectorTitle>
        <SectorList>
          {sectors.map(([n, v, w, sh]) => (
            <Sector key={n} $w={w} $sh={sh}>
              <Txt $s={26} $c="#333">{n}</Txt>
              <Txt $s={27} $c={UP} $w={500} $ls={0.4}>{v}</Txt>
            </Sector>
          ))}
        </SectorList>
      </Sectors>
      <Band $h={15} />

      <InfoTabs>
        <InfoTab $w={108}>必看<Dot /></InfoTab>
        <InfoTab $w={107}>盘口</InfoTab>
        <InfoTab $w={111} $on>资金</InfoTab>
        <InfoTab $w={107}>资讯</InfoTab>
        <InfoTab $w={167}>简况/F10</InfoTab>
        <InfoTab $w={80}>互动</InfoTab>
      </InfoTabs>

      <Bottom>
        <IndexBox>
          <IndexLine>
            <Txt $s={30} $c={UP} $w={500} $ls={-1.4}>1996.51</Txt>
            <Gap $l={8}><Stroke w={14} h={9} d="M1 8L7 1.500L13 8" sw={1.8} c="#333" /></Gap>
          </IndexLine>
          <IndexLine>
            <Txt $s={20.5}>创业板指</Txt>
            <Txt $s={20.5} $c={UP} $ml={8}>+0.51%</Txt>
          </IndexLine>
        </IndexBox>
        <Trade $w={158}>买</Trade>
        <Trade $w={158}>卖</Trade>
        <Trade $w={157}>撤</Trade>
        <More>
          <svg width="32" height="32" viewBox="0 0 32 32" fill="none" stroke="#333" strokeWidth="2"><circle cx="16" cy="16" r="14.500" /><g fill="#333" stroke="none"><circle cx="10" cy="16" r="1.700" /><circle cx="16" cy="16" r="1.700" /><circle cx="22" cy="16" r="1.700" /></g></svg>
          更多
        </More>
      </Bottom>
    </Page>
  );
}
